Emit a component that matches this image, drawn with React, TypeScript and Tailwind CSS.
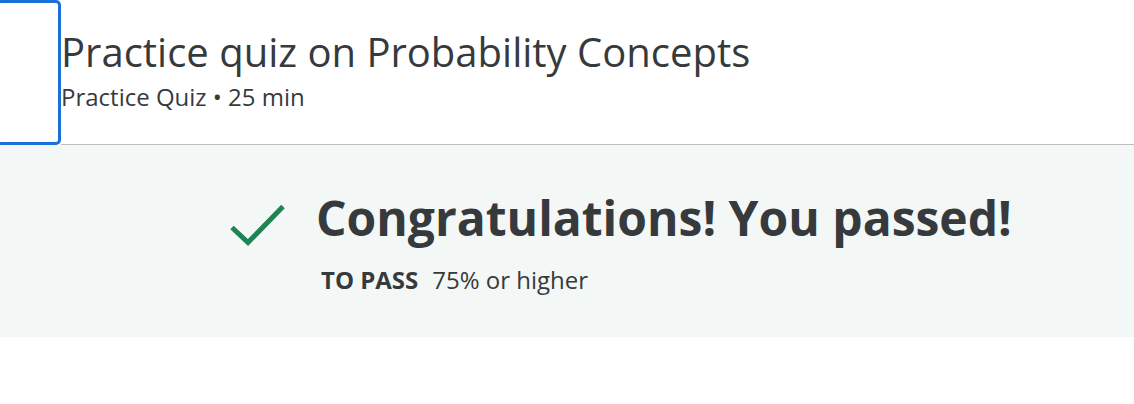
export default function App() {
  return (
    <div className="min-h-screen bg-white font-['Open_Sans',sans-serif] text-[#373a3c]">
      <header className="flex h-[145px]">
        <div className="-ml-[4px] w-[65px] shrink-0 rounded-[5px] border-[3px] border-[#1a6fdb]" aria-hidden />
        <div className="flex-1 border-b border-[#bdbdbd] pt-[28px]">
          <h1 className="text-[40px] leading-[48px]">Practice quiz on Probability Concepts</h1>
          <p className="mt-[5px] text-[24px] leading-[32px]">Practice Quiz • 25 min</p>
        </div>
      </header>

      <section className="flex h-[192px] bg-[#f3f8f6] pl-[228px] pt-[45px]">
        <div className="w-[88px] shrink-0">
          <svg width="60" height="50" viewBox="0 0 60 50" className="mt-[11px]" aria-hidden>
            <polyline points="4,26.5 20,41.5 55,5.5" fill="none" stroke="#1f8354" strokeWidth="5" />
          </svg>
        </div>
        <div>
          <h2 className="text-[48px] font-bold leading-[56px]">Congratulations! You passed!</h2>
          <p className="ml-[5px] mt-[18px] text-[24px] leading-[32px]">
            <span className="font-bold">TO PASS</span>
            <span className="ml-[14px]">75% or higher</span>
          </p>
        </div>
      </section>
    </div>
  );
}
